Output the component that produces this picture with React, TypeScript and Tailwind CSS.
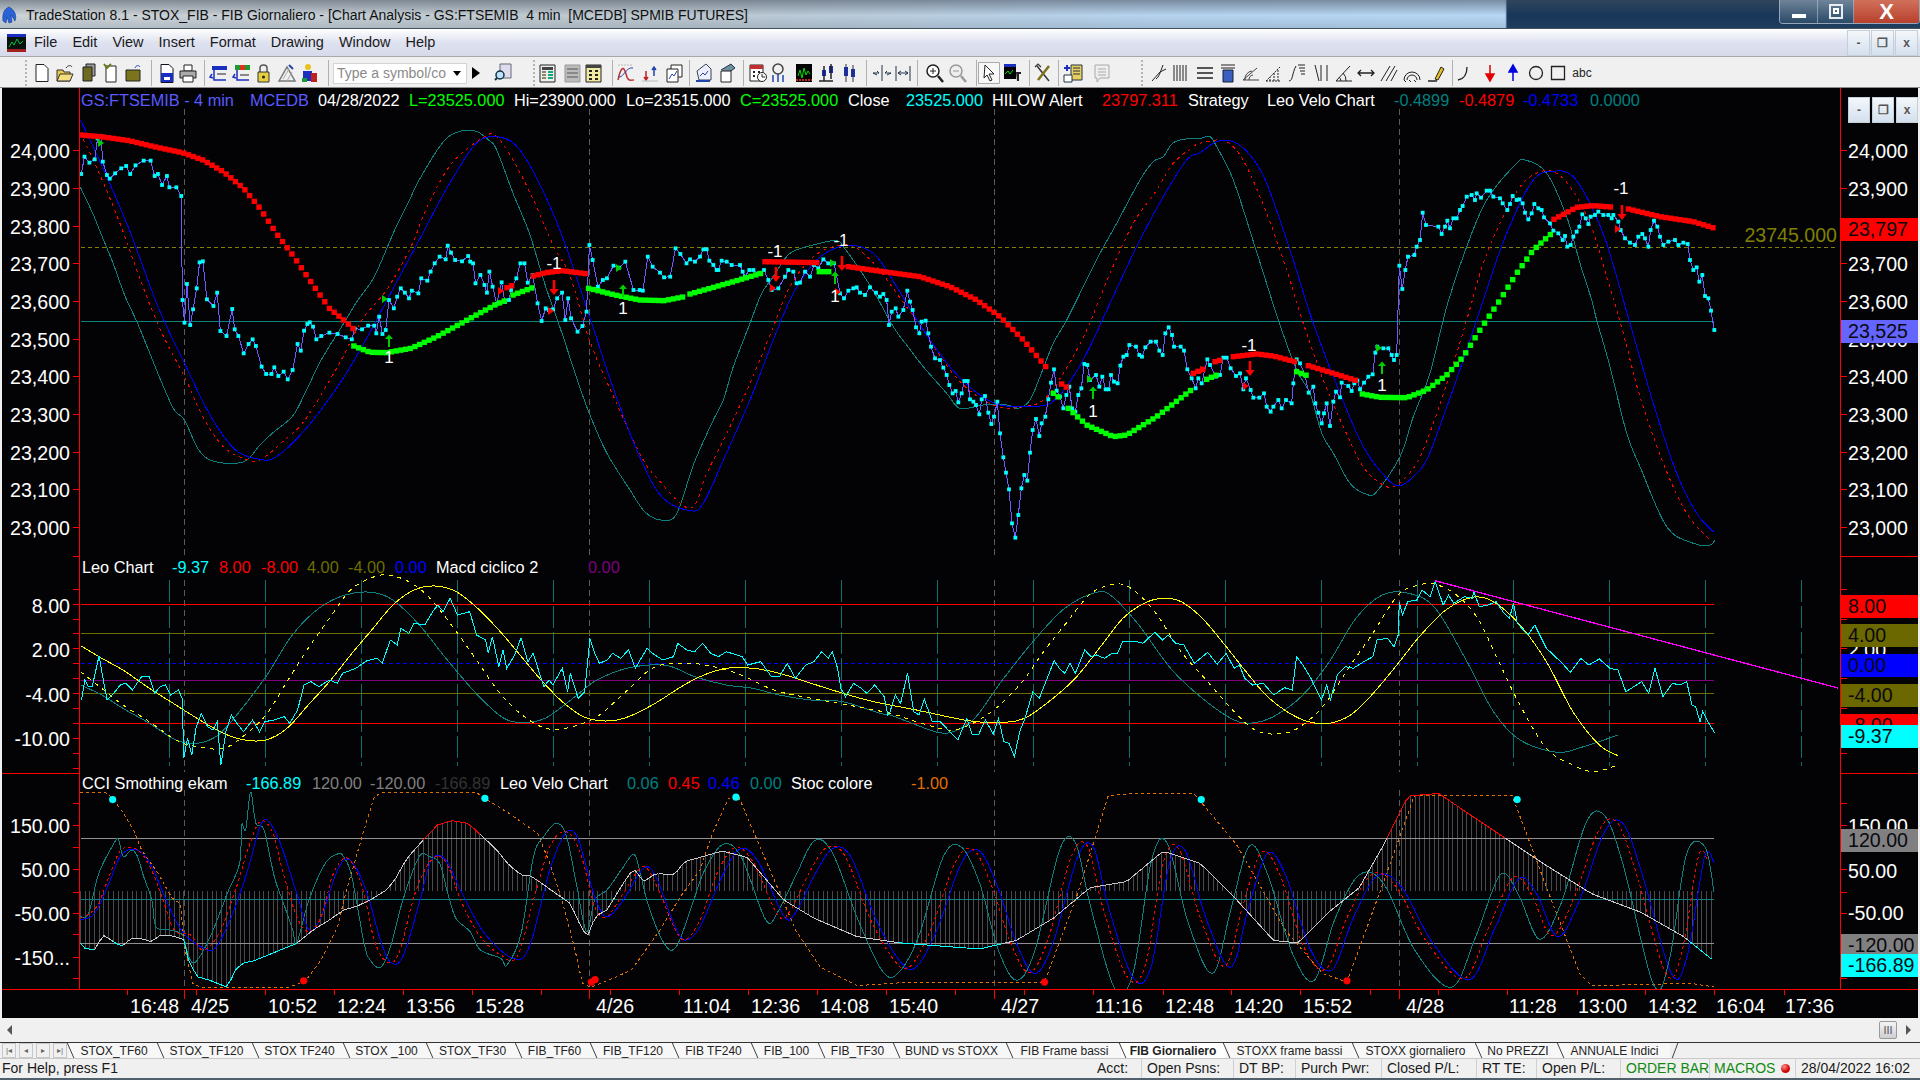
import type { ReactNode } from "react";

type Pt = [number, number];

const parse = (s: string, fn: (x: number, y: number) => Pt): Pt[] =>
  s.trim().split(/\s+/).map((p) => {
    const [x, y] = p.split(",").map(Number);
    return fn(x, y);
  });

// traced from crops of the chart, each with its own origin
const z7 = (s: string) => parse(s, (x, y) => [60 + x / 2.45, 100 + y / 3]);
const z8 = (s: string) => parse(s, (x, y) => [60 + x / 2.45, 760 + y / 3]);
const z9 = (s: string) => parse(s, (x, y) => [690 + x / 3, 100 + y / 3]);
const z10 = (s: string) => parse(s, (x, y) => [1200 + x / 3, 100 + y / 3]);
const z11 = (s: string) => parse(s, (x, y) => [70 + x / 1.889, 555 + y / 3]);
const z12 = (s: string) => parse(s, (x, y) => [890 + x / 1.889, 555 + y / 3]);
const rf = (s: string) => parse(s, (x, y) => [x * 1.2245, y * 1.2245]);

const line = (p: Pt[]) => "M" + p.map(([x, y]) => `${x.toFixed(1)} ${y.toFixed(1)}`).join("L");

function smooth(p: Pt[]) {
  let d = `M${p[0][0].toFixed(1)} ${p[0][1].toFixed(1)}`;
  for (let i = 0; i < p.length - 1; i++) {
    const a = p[Math.max(0, i - 1)];
    const b = p[i];
    const c = p[i + 1];
    const e = p[Math.min(p.length - 1, i + 2)];
    d += `C${(b[0] + (c[0] - a[0]) / 6).toFixed(1)} ${(b[1] + (c[1] - a[1]) / 6).toFixed(1)} ${(c[0] - (e[0] - b[0]) / 6).toFixed(1)} ${(c[1] - (e[1] - b[1]) / 6).toFixed(1)} ${c[0].toFixed(1)} ${c[1].toFixed(1)}`;
  }
  return d;
}

function sample(p: Pt[], step = 4.7): Pt[] {
  const out: Pt[] = [];
  let i = 0;
  for (let x = p[0][0]; x <= p[p.length - 1][0]; x += step) {
    while (i < p.length - 2 && p[i + 1][0] < x) i++;
    const t = (x - p[i][0]) / (p[i + 1][0] - p[i][0] || 1);
    out.push([x, p[i][1] + (p[i + 1][1] - p[i][1]) * t]);
  }
  return out;
}

const mainTeal = [
  ...z7("50,262 80,340 100,400 130,490 160,590 190,670 220,760 250,850 280,930 305,960 340,1050 380,1085 450,1085 490,1035 520,1000 570,948 600,880 640,780 690,680 730,600 770,530 820,390 860,290 880,240 930,140 965,100 1015,92 1050,120 1070,150 1110,280 1150,400 1190,560 1230,700 1270,850 1300,950 1340,1060"),
  [630, 490] as Pt, [645, 512] as Pt, [661, 520] as Pt, [676, 515] as Pt,
  ...z9("0,1125 20,1070 70,960 100,900 130,800 180,670 215,580 250,530 300,460 380,432 440,422 460,440 510,510 560,590 610,680 655,742 700,800 770,880 810,925 880,915 950,915 985,925 1020,900 1050,830 1090,730 1130,660 1180,560 1230,460 1280,370 1350,240 1390,185 1420,170 1450,128 1500,115"),
  ...z10("0,115 30,110 50,140 100,240 165,440 235,660 290,810 330,880 365,1000 400,1060 450,1150 500,1183 530,1175 600,1070 640,950 690,820 740,620 800,440 860,300 940,200 975,180 1040,220 1100,350 1140,490 1175,600 1190,660 1230,800 1280,1000 1320,1100 1400,1280 1480,1330 1530,1335 1545,1320"),
];
const mainRed = [
  ...z7("50,100 100,230 150,380 200,550 250,700 305,830 350,950 400,1040 450,1075 490,1080 550,1020 600,960 680,800 740,660 800,570 860,440 900,320 960,190 1040,110 1070,110 1110,180 1160,300 1210,440 1250,530 1300,730 1360,900 1420,1060 1460,1130"),
  ...z9("0,1225 50,1120 110,1000 180,850 250,680 300,560 370,470 450,435 500,445 560,500 620,580 700,690 780,810 850,880 930,922 1000,920 1060,900 1120,820 1190,690 1260,520 1330,370 1400,270 1450,190 1510,140"),
  ...z10("0,130 60,120 100,140 140,200 200,340 260,510 310,670 370,840 430,980 490,1100 550,1155 590,1155 650,1090 700,970 760,790 800,660 850,490 900,370 960,260 1010,220 1060,215 1110,260 1170,370 1220,530 1270,700 1320,890 1390,1090 1460,1240 1530,1320"),
];
const mainBlue = [
  ...z7("50,60 100,190 170,390 240,620 305,790 370,950 430,1050 490,1078 530,1070 600,990 680,860 740,740 810,580 880,420 950,260 1020,130 1080,112 1130,155 1190,290 1240,440 1300,660 1360,880 1420,1070"),
  [662, 497] as Pt,
  ...z9("0,1232 40,1210 100,1080 180,900 250,720 310,580 380,480 450,440 510,440 560,470 620,560 700,690 780,800 850,870 930,915 1050,918 1100,895 1150,830 1200,740 1260,610 1340,440 1420,290 1490,180"),
  ...z10("0,158 50,125 100,125 150,165 200,250 270,450 340,670 420,880 490,1040 560,1135 600,1157 640,1130 680,1080 730,950 790,780 850,600 920,400 1000,240 1070,213 1120,230 1170,310 1220,430 1290,670 1360,910 1430,1120 1490,1240 1540,1295"),
];
const price = [
  ...z7("52,222 60,170 72,188 85,178 92,115 100,108 105,185 115,225 122,236 135,220 150,205 162,198 172,222 185,196 205,182 222,182 232,228 240,222 250,255 262,228 268,262 285,262 297,288 300,600 305,668 311,552 319,675 326,628 335,565 342,487 350,484 360,598 376,618 385,578 393,693 408,708 422,627 428,688 437,708 450,760 462,732 472,718 480,738 494,800 505,822 518,822 525,802 535,828 548,815 558,838 570,810 582,732 590,752 598,692 606,672 612,667 620,680 628,718 640,708 660,698 680,702 700,712 715,718 722,686 740,688 755,677 770,677 775,700 782,650 790,702 798,690 806,600 818,625 826,590 835,565 845,578 855,595 862,572 878,580 885,535 900,542 908,515 918,490 930,470 945,478 950,437 958,458 968,480 985,484 1000,468 1005,485 1012,490 1018,550 1030,525 1040,555 1046,578 1052,515 1060,560 1070,612 1082,547 1090,606 1100,600 1105,570 1118,535 1128,490 1138,490 1146,548 1158,525 1170,610 1180,663 1190,625 1198,630 1208,628 1218,595 1230,578 1238,660 1245,595 1252,655 1268,695 1280,678 1290,635 1297,435 1305,480 1318,560 1330,540 1340,535 1356,497 1370,503 1385,485 1405,570 1420,570 1428,572 1440,470 1452,500 1470,518 1480,532 1495,530 1508,445 1520,462 1535,490"),
  ...z9("0,478 15,485 30,470 40,448 50,448 58,482 70,495 80,510 85,510 95,482 110,485 125,495 150,495 158,515 165,530 178,510 190,510 205,520 222,510 235,540 245,570 265,565 285,530 295,510 310,515 320,550 330,548 345,515 360,530 372,495 385,505 400,478 415,490 432,490 450,580 462,595 475,572 490,565 500,562 510,578 525,585 540,562 558,578 570,590 580,582 590,600 597,675 605,635 617,625 625,650 640,630 652,572 660,605 668,630 678,682 688,700 695,665 707,662 715,700 723,740 735,775 750,780 760,803 770,825 778,855 788,880 797,873 805,907 815,880 823,843 833,843 840,898 850,905 858,915 868,943 875,898 885,888 895,938 904,972 912,950 922,905 930,1000 940,1072 948,1118 957,1168 966,1270 976,1313 985,1245 994,1165 1003,1125 1012,1142 1020,1058 1028,990 1038,957 1048,1008 1055,970 1066,950 1075,898 1083,848 1092,808 1100,872 1110,890 1120,925 1129,885 1138,860 1146,925 1156,935 1165,885 1174,865 1183,792 1192,795 1200,840 1218,825 1228,860 1237,830 1247,868 1256,868 1263,825 1272,845 1283,850 1291,797 1300,770 1310,765 1318,735 1338,740 1348,765 1356,770 1366,742 1382,725 1398,725 1408,752 1418,765 1426,700 1436,682 1446,705 1452,740 1472,740 1482,752 1492,808 1505,835 1517,865 1525,835 1535,850"),
  ...z10("22,778 30,795 48,830 60,825 70,773 80,773 92,805 108,828 120,820 130,868 138,835 152,870 160,893 178,893 192,880 200,920 212,935 220,920 235,900 245,925 258,900 275,910 280,850 290,778 300,790 315,825 326,878 340,860 346,910 355,938 365,970 372,940 380,910 390,978 400,905 408,875 420,892 425,848 445,858 455,873 463,850 472,842 480,868 492,848 505,830 518,823 526,758 532,740 550,745 565,745 575,765 582,780 590,765 598,497 607,567 616,510 624,470 643,465 650,440 660,420 668,338 678,375 715,380 725,402 735,380 742,362 750,385 760,355 770,355 780,330 788,318 800,290 815,285 825,300 830,280 843,293 860,272 870,272 880,290 900,295 908,310 922,330 930,312 938,288 950,300 958,298 968,310 975,338 985,358 995,340 1003,312 1015,325 1025,330 1032,352 1050,370 1060,392 1075,400 1088,420 1095,408 1102,440 1112,435 1120,410 1130,395 1138,380 1147,343 1157,355 1165,372 1172,350 1185,345 1195,335 1210,345 1225,345 1235,355 1240,345 1255,365 1262,390 1275,415 1290,428 1305,435 1315,410 1327,402 1335,415 1345,440 1352,390 1362,362 1372,380 1380,410 1390,435 1405,425 1425,420 1435,435 1450,428 1463,432 1470,480 1480,510 1490,502 1498,545 1507,525 1515,588 1525,595 1533,632 1543,690"),
];

const redBands: Pt[][] = [
  z7("50,105 100,110 170,122 230,140 300,158 350,180 400,215 450,265 490,325 530,400 570,465 620,555 660,625 700,665 720,688"),
  z7("1095,563 1115,553"),
  z7("1160,528 1190,518 1230,512 1295,522"),
  z9("225,485 385,488"),
  z9("475,500 580,515 690,530 780,560 860,600 930,650 1000,720 1080,815"),
  z9("1115,852 1135,865"),
  z9("1510,820 1545,805"),
  z10("45,785 70,778"),
  z10("100,770 170,762 220,768 285,785"),
  z10("325,797 400,820 470,842 480,848"),
  z10("1062,358 1130,322 1180,317 1245,322"),
  z10("1285,327 1380,350 1480,365 1545,385"),
];
const greenBands: Pt[][] = [
  z7("720,738 760,757 800,758 860,745 920,712 980,672 1020,645 1070,612 1095,600"),
  z7("1110,585 1160,562"),
  z7("1295,565 1360,585 1420,600 1480,602 1530,590"),
  z9("0,582 60,565 130,545 220,518"),
  z9("388,515 422,515"),
  z9("1090,880 1110,895"),
  z9("1135,925 1190,975 1270,1010 1310,1005 1400,950 1510,865"),
  z10("20,838 50,825"),
  z10("290,815 322,827"),
  z10("487,882 540,892 620,893 680,870 740,825 790,770 840,690 900,600 950,520 1000,450 1055,400"),
];

const downArrows: Pt[] = [[554, 280], [776, 267], [842, 256], [1250, 361], [1622, 205]];
const upArrows: Pt[] = [[389, 335], [623, 285], [835, 272], [1093, 387], [1382, 362]];
const marks: { x: number; y: number; t: string }[] = [
  { x: 389, y: 357, t: "1" }, { x: 623, y: 308, t: "1" }, { x: 554, y: 263, t: "-1" },
  { x: 775, y: 251, t: "-1" }, { x: 835, y: 296, t: "1" }, { x: 841, y: 240, t: "-1" },
  { x: 1093, y: 411, t: "1" }, { x: 1249, y: 345, t: "-1" }, { x: 1382, y: 385, t: "1" },
  { x: 1621, y: 188, t: "-1" },
];
const tinyGreen: Pt[] = [[100, 143], [384, 299], [618, 268], [832, 263], [1089, 379], [1378, 348]];
const tinyRed: Pt[] = [[500, 291], [550, 311], [772, 288], [837, 292], [1245, 386], [1617, 229], [1202, 370]];

const leoYellow = [
  ...z11("20,272 60,310 100,345 150,400 200,450 240,490 290,535 330,555 370,555 410,520 450,450 490,380 530,300 570,225 610,150 650,105 690,93 730,110 770,160 810,225 850,300 890,375 930,440 970,485 1010,498 1050,488 1100,450 1150,400 1190,365 1240,340 1290,340 1340,355 1400,385 1460,415 1510,437"),
  ...z12("0,450 50,465 100,482 140,495 180,502 230,500 260,485 300,440 350,370 400,270 440,190 480,145 515,130 550,140 590,190 630,265 670,345 710,420 750,470 790,500 830,505 870,480 910,420 960,325 1000,245 1050,165 1100,127 1140,140 1190,210 1240,320 1290,470 1340,570 1375,602"),
];
const leoDash = [
  ...z11("20,350 60,400 100,450 150,500 200,555 240,575 290,580 330,540 370,480 410,380 450,280 490,190 530,105 570,68 600,60 640,80 680,130 730,230 770,320 810,410 850,475 890,515 920,523 960,510 1000,480 1050,410 1100,340 1150,325 1200,330 1260,355 1330,405 1400,430 1470,450"),
  ...z12("0,475 50,500 110,525 150,510 200,460 250,380 290,290 330,210 380,115 425,88 455,100 500,170 550,290 600,380 650,470 690,525 730,537 770,520 820,450 870,330 910,240 960,120 1000,90 1030,88 1070,120 1110,190 1150,320 1190,450 1240,580 1290,630 1330,650 1375,630"),
];
const leoTeal = [
  ...z11("20,390 60,420 100,460 150,505 200,555 240,565 280,540 320,470 370,365 420,240 470,160 520,120 570,112 610,135 660,210 710,310 770,420 820,490 860,502 900,488 950,430 990,380 1040,345 1080,332 1130,332 1180,365 1240,390 1290,400 1340,420 1400,435 1460,440 1530,475"),
  ...z12("0,480 50,510 90,532 120,530 160,490 210,380 270,260 330,160 390,112 420,125 470,210 530,340 590,430 650,495 690,503 730,480 780,420 830,320 880,190 930,120 980,115 1030,160 1090,320 1140,470 1190,555 1260,592 1310,575 1375,540"),
];
const leoCyan = [
  ...z11("22,435 28,375 35,395 42,395 55,302 60,350 70,435 85,410 95,390 105,385 118,405 135,365 150,365 160,415 170,395 180,390 190,420 205,405 212,430 215,610 222,550 230,600 238,520 248,475 260,515 270,525 278,500 285,630 295,525 305,480 315,505 328,530 345,495 358,530 368,500 385,495 405,485 415,505 430,465 442,390 455,380 470,395 490,375 505,385 515,355 540,340 560,318 580,310 590,325 605,255 618,270 625,220 640,235 650,205 670,210 685,170 695,150 705,170 718,130 732,180 755,170 768,240 785,255 790,295 798,245 810,335 818,285 825,340 840,300 852,248 865,320 875,295 895,395 905,375 912,390 930,340 940,410 945,355 960,430 972,410 978,320 982,250 990,290 1000,325 1015,315 1025,295 1040,310 1055,285 1068,340 1090,280 1100,295 1120,315 1140,305 1148,265 1165,285 1180,290 1195,265 1210,295 1225,305 1240,290 1270,305 1280,330 1305,320 1325,365 1340,365 1355,325 1370,370 1390,330 1405,320 1420,290 1432,310 1440,290 1450,340 1456,400 1465,425 1480,385 1495,400 1505,415 1520,390 1538,425 1545,480"),
  ...z12("0,470 10,420 20,445 33,355 45,470 55,480 65,433 80,500 95,500 110,525 128,555 145,490 155,537 168,537 180,495 195,537 205,490 215,560 225,565 235,605 245,530 255,490 270,410 282,430 310,317 320,340 330,355 340,325 350,355 368,285 380,305 390,300 405,310 420,295 430,295 440,258 460,258 478,265 500,232 515,255 525,240 540,265 555,270 575,325 600,292 618,328 635,295 650,340 660,330 670,370 685,390 705,385 725,420 745,398 760,405 768,305 780,330 795,370 815,435 825,390 832,435 845,360 860,335 875,340 895,320 912,305 920,255 940,250 952,275 960,240 962,140 968,180 978,140 995,135 1005,105 1020,125 1030,80 1045,150 1055,120 1065,145 1085,125 1100,130 1103,110 1113,155 1130,150 1145,140 1158,170 1170,190 1178,145 1185,205 1205,240 1218,210 1240,280 1270,325 1285,352 1305,310 1320,330 1340,312 1360,340 1375,345 1390,410 1420,380 1433,415 1445,340 1460,425 1478,385 1492,390 1505,380 1515,450 1522,455 1530,500 1535,470 1545,500 1558,535"),
];

const blueRight = rf("590,715 605,693 620,705 640,748 650,745 665,715 680,693 695,700 715,750 735,785 748,790 765,760 785,705 800,695 815,725 830,770 845,795 860,770 880,700 893,692 905,740 925,798 940,790 955,705 968,695 985,750 1005,790 1020,740 1035,697 1050,715 1070,775 1088,792 1105,750 1125,715 1145,725 1170,770 1200,800 1220,760 1240,718 1255,730 1272,765 1290,735 1310,680 1325,672 1340,710 1365,795 1378,780 1392,700 1400,705");
const cciBlue = [
  ...z8("50,480 85,460 120,370 150,285 190,270 225,320 260,420 300,515 345,560 380,565 420,470 460,330 490,200 510,183 540,250 580,400 610,510 640,470 680,330 710,300 750,390 785,540 810,607 840,590 880,430 910,300 945,300 985,400 1040,520 1110,595 1150,560 1200,330 1240,218 1270,240 1310,410 1340,470 1380,420 1430,325 1460,350 1500,480 1530,540 1568,500"),
  ...blueRight,
];
const cciRed = [
  ...z8("50,475 90,440 120,350 150,270 190,270 220,320 250,410 280,510 320,525 350,570 390,520 430,390 460,270 490,185 520,215 545,330 580,470 610,515 640,470 670,340 705,295 740,380 770,540 800,605 830,580 870,400 910,300 945,305 985,430 1030,530 1080,585 1120,590 1160,420 1200,260 1240,215 1275,280 1310,440 1340,470 1380,400 1430,320 1470,400 1500,490 1530,540 1568,480"),
  ...blueRight.map(([x, y]): Pt => [x - 6, y - 1]),
];
const cciTeal = [
  ...z8("50,470 70,460 95,340 130,255 143,238 155,290 175,270 190,290 205,350 225,420 235,500 270,510 300,525 315,590 333,605 370,525 410,400 440,310 445,195 455,210 467,97 480,190 500,210 525,350 545,420 570,510 580,550 610,420 650,310 680,282 695,290 715,350 745,550 760,600 785,622 810,560 840,420 880,290 905,290 930,310 950,400 970,475 1005,515 1030,570 1080,595 1095,615 1130,520 1160,290 1185,230 1215,190 1240,225 1265,370 1290,515 1310,420 1340,390 1375,330 1405,283 1420,330 1440,430 1480,550 1510,560 1550,430"),
  ...blueRight.slice(0, -1).map(([x, y], i): Pt => [x - 18, y + (y - 900) * 0.12 + (i % 2 ? 2 : -2)]),
  [1705, 847],
  [1714, 892],
];
const cciStoc = [
  ...z8("50,97 110,97 125,110 150,150 180,210 200,270 240,340 275,415 295,430 305,560 325,670 345,682 410,682 560,682 600,665 640,600 680,500 700,400 740,230 770,110 790,97 1020,97 1040,115 1100,160 1170,220 1200,310 1230,420 1260,560 1280,670 1300,682 1340,663 1400,630 1470,510 1520,410 1568,330"),
  ...rf("582,680 595,652 603,650 620,690 650,760 670,790 700,805 745,802 853,802 880,730 905,650 925,648 975,648 1010,690 1050,760 1080,795 1100,802 1130,720 1155,650 1235,650 1265,730 1290,795 1300,805 1380,803 1400,806"),
];
const cciEnv = sample([
  ...z8("50,550 60,565 85,570 105,525 125,540 150,560 175,535 195,535 225,545 245,525 275,527 305,540 315,600 335,650 365,660 410,682 430,630 450,607 470,605 520,580 580,550 620,510 660,480 695,450 725,440 760,420 800,390 820,360 850,295 890,240 925,195 960,182 1000,190 1040,235 1070,270 1100,315 1130,345 1150,345 1180,370 1220,405 1250,430 1280,510 1295,527 1310,470 1340,450 1380,370 1405,325 1430,365 1460,340 1505,345 1530,305 1568,292"),
  ...rf("590,695 610,700 640,735 665,750 700,765 735,770 760,772 800,775 830,768 860,750 890,725 920,720 950,695 980,705 1010,735 1040,768 1060,770 1085,745 1110,725 1130,690 1150,650 1175,648 1200,665 1230,685 1260,705 1300,730 1340,745 1375,765 1400,785"),
]);

const cyanDots: Pt[] = rf("92,653 396,652 601,651 981,653 1239,653");
const redDots: Pt[] = rf("248,801 483,802 486,800 853,802 1100,801");

const sessions = [184.5, 589.5, 994.5, 1399.5];
const leoGrid = [169.5, 265.5, 361.5, 457.5, 553.5, 649.5, 745.5, 841.5, 937.5, 1033.5, 1129.5, 1225.5, 1321.5, 1417.5, 1513.5, 1609.5, 1705.5, 1801.5];

const hLine = (y: number, color: string, x2 = 1714, dash?: string, w = 1) => (
  <line x1={81} x2={x2} y1={y} y2={y} stroke={color} strokeWidth={w} strokeDasharray={dash} shapeRendering="crispEdges" />
);

function Curve({ d, color, dash }: { d: string; color: string; dash?: string }) {
  return <path d={d} fill="none" stroke={color} strokeDasharray={dash} shapeRendering="crispEdges" />;
}

function MainPlot() {
  return (
    <svg viewBox="80 88 1760 468" className="block h-full w-full">
      {sessions.map((x) => (
        <line key={x} x1={x} x2={x} y1={109} y2={556} stroke="#5a5a5a" strokeDasharray="6 4" shapeRendering="crispEdges" />
      ))}
      {hLine(247.5, "#808000", 1837, "4 3")}
      {hLine(321.5, "#0e8080")}
      <Curve d={smooth(mainTeal)} color="#0e8080" />
      <Curve d={smooth(mainRed)} color="#ff0000" dash="3 4" />
      <Curve d={smooth(mainBlue)} color="#0000ff" />
      <Curve d={line(price)} color="#6a5cff" />
      {price.map(([x, y], i) => (
        <rect key={i} x={x - 1.9} y={y - 1.9} width={3.8} height={3.8} fill="#00ffff" />
      ))}
      {redBands.map((b, i) =>
        sample(b).map(([x, y], j) => <rect key={`r${i}-${j}`} x={x - 2.7} y={y - 2.7} width={5.4} height={5.4} fill="#ff0000" />)
      )}
      {greenBands.map((b, i) =>
        sample(b).map(([x, y], j) => <rect key={`g${i}-${j}`} x={x - 2.7} y={y - 2.7} width={5.4} height={5.4} fill="#00ff00" />)
      )}
      {downArrows.map(([x, y]) => (
        <path key={x} d={`M${x - 1.3} ${y}h2.6v9h3.4l-4.7 6l-4.7 -6h3.4z`} fill="#ff0000" />
      ))}
      {upArrows.map(([x, y]) => (
        <path key={x} d={`M${x - 1} ${y + 12}h2v-8h3l-4 -4.5l-4 4.5h3z`} fill="#00d000" />
      ))}
      {tinyGreen.map(([x, y]) => (
        <path key={x} d={`M${x - 2} ${y - 4}l6 4l-6 4z`} fill="#00d000" />
      ))}
      {tinyRed.map(([x, y]) => (
        <path key={x} d={`M${x - 2} ${y - 4}l6 4l-6 4z`} fill="#ff0000" />
      ))}
    </svg>
  );
}

function LeoPlot() {
  return (
    <svg viewBox="80 556 1760 217" className="block h-full w-full">
      {leoGrid.map((x) => (
        <line key={x} x1={x} x2={x} y1={580} y2={766} stroke="#0e7070" strokeDasharray="22 4" shapeRendering="crispEdges" />
      ))}
      {sessions.map((x) => (
        <line key={x} x1={x} x2={x} y1={580} y2={772} stroke="#5a5a5a" strokeDasharray="6 4" shapeRendering="crispEdges" />
      ))}
      {hLine(604.5, "#ff0000")}
      {hLine(633.5, "#6e6e00")}
      {hLine(663.5, "#0000ff", 1714, "4 3")}
      {hLine(680.5, "#800080")}
      {hLine(693.5, "#6e6e00")}
      {hLine(723.5, "#ff0000")}
      <Curve d={smooth(leoTeal)} color="#0e8080" />
      <Curve d={smooth(leoDash)} color="#ffff00" dash="4 5" />
      <Curve d={smooth(leoYellow)} color="#ffff00" />
      <Curve d={line(leoCyan)} color="#00ffff" />
      <line x1={1435} y1={580.7} x2={1838} y2={688} stroke="#ff00ff" strokeWidth={1.3} shapeRendering="crispEdges" />
    </svg>
  );
}

function CciPlot() {
  const envColor = (y: number) => (y < 838 ? "#ff0000" : y > 943 ? "#00ffff" : "#c8c8c8");
  return (
    <svg viewBox="80 773 1760 216" className="block h-full w-full">
      {cciEnv.map(([x, y], i) => (
        <line key={i} x1={x} x2={x} y1={891} y2={y} stroke="#4a4a4a" shapeRendering="crispEdges" />
      ))}
      {sessions.map((x) => (
        <line key={x} x1={x} x2={x} y1={790} y2={989} stroke="#5a5a5a" strokeDasharray="6 4" shapeRendering="crispEdges" />
      ))}
      {hLine(838.5, "#909090")}
      {hLine(899.5, "#0e8080")}
      {hLine(943.5, "#909090")}
      <Curve d={line(cciStoc)} color="#e07000" dash="3 3" />
      <Curve d={smooth(cciTeal)} color="#0e8080" />
      <Curve d={smooth(cciBlue)} color="#0000ff" />
      <Curve d={smooth(cciRed)} color="#ff0000" dash="3 3" />
      {cciEnv.slice(1).map(([x, y], i) => (
        <line key={i} x1={cciEnv[i][0]} y1={cciEnv[i][1]} x2={x} y2={y} stroke={envColor(y)} shapeRendering="crispEdges" />
      ))}
      {cyanDots.map(([x, y]) => (
        <circle key={x} cx={x} cy={y} r={3.6} fill="#00ffff" />
      ))}
      {redDots.map(([x, y]) => (
        <circle key={x} cx={x} cy={y} r={3.6} fill="#ff0000" />
      ))}
    </svg>
  );
}

type Box = { y: number; t: string; bg?: string };

function Axis({ top, ticks, labels, side }: { top: number; ticks: number[]; labels: Box[]; side: "l" | "r" }) {
  return (
    <div className="relative h-full">
      {side === "r" ? <div className="absolute inset-y-0 left-0 w-px bg-[#ff0000]" /> : <div className="absolute inset-y-0 right-0 w-px bg-[#ff0000]" />}
      {ticks.map((y) => (
        <div
          key={y}
          className={side === "r" ? "absolute left-0 h-px w-[7px] bg-[#ff0000]" : "absolute right-0 h-px w-[7px] bg-[#ff0000]"}
          style={{ top: y - top }}
        />
      ))}
      {labels.map((l) =>
        l.bg ? (
          <div
            key={l.t + l.y}
            className={`absolute left-px right-0 flex h-[23px] items-center pl-[7px] text-[#0a0a10] ${l.bg}`}
            style={{ top: l.y - top }}
          >
            {l.t}
          </div>
        ) : (
          <div
            key={l.t + l.y}
            className={side === "r" ? "absolute left-[8px] flex h-[23px] items-center text-white" : "absolute right-[10px] flex h-[23px] items-center text-white"}
            style={{ top: l.y - top - 10 }}
          >
            {l.t}
          </div>
        )
      )}
    </div>
  );
}

type Leg = [string, number, string];

function Legend({ items, y }: { items: Leg[]; y: number }) {
  return (
    <>
      {items.map(([t, x, c]) => (
        <span key={t + x} className="absolute whitespace-pre text-[16.3px] leading-[20px]" style={{ left: x - 2, top: y - 98, color: c }}>
          {t}
        </span>
      ))}
    </>
  );
}

const legendMain: Leg[] = [
  ["GS:FTSEMIB - 4 min", 81, "#5a5aff"], ["MCEDB", 250, "#5a5aff"], ["04/28/2022", 318, "#ffffff"],
  ["L=23525.000", 409, "#00ff00"], ["Hi=23900.000", 514, "#ffffff"], ["Lo=23515.000", 626, "#ffffff"],
  ["C=23525.000", 740, "#00ff00"], ["Close", 848, "#ffffff"], ["23525.000", 906, "#00ffff"],
  ["HILOW Alert", 992, "#ffffff"], ["23797.311", 1102, "#ff0000"], ["Strategy", 1188, "#ffffff"],
  ["Leo Velo Chart", 1267, "#ffffff"], ["-0.4899", 1394, "#008080"], ["-0.4879", 1459, "#ff0000"],
  ["-0.4733", 1523, "#0000ff"], ["0.0000", 1590, "#008080"],
];
const legendLeo: Leg[] = [
  ["Leo Chart", 82, "#ffffff"], ["-9.37", 172, "#00ffff"], ["8.00", 219, "#ff0000"], ["-8.00", 261, "#ff0000"],
  ["4.00", 307, "#6e6e00"], ["-4.00", 348, "#6e6e00"], ["0.00", 395, "#0000ff"], ["Macd ciclico 2", 436, "#ffffff"],
  ["0.00", 588, "#800080"],
];
const legendCci: Leg[] = [
  ["CCI Smothing ekam", 82, "#ffffff"], ["-166.89", 246, "#00ffff"], ["120.00", 312, "#808080"], ["-120.00", 370, "#808080"],
  ["-166.89", 435, "#333333"], ["Leo Velo Chart", 500, "#ffffff"], ["0.06", 627, "#008080"], ["0.45", 668, "#ff0000"],
  ["0.46", 708, "#0000ff"], ["0.00", 750, "#008080"], ["Stoc colore", 791, "#ffffff"], ["-1.00", 911, "#e07000"],
];

const timeLabels: [string, number][] = [
  ["16:48", 130], ["4/25", 191], ["10:52", 268], ["12:24", 337], ["13:56", 406], ["15:28", 475], ["4/26", 596],
  ["11:04", 683], ["12:36", 751], ["14:08", 820], ["15:40", 889], ["4/27", 1001], ["11:16", 1095], ["12:48", 1165],
  ["14:20", 1234], ["15:52", 1303], ["4/28", 1406], ["11:28", 1509], ["13:00", 1578], ["14:32", 1648], ["16:04", 1716],
  ["17:36", 1785],
];
const timeTicks = [127, 196, 265, 334, 403, 472, 541, 610, 679, 748, 817, 886, 955, 1024, 1093, 1163, 1231, 1300, 1370, 1438, 1507, 1577, 1645, 1714, 1784];

const S = (p: ReactNode) => (
  <svg viewBox="0 0 22 22" className="block h-[22px] w-[22px]" fill="none">
    {p}
  </svg>
);

const icons: Record<string, ReactNode> = {
  doc: <path d="M5 2.5h8l4 4v13H5z" fill="#fff" stroke="#222" />,
  open: (
    <>
      <path d="M3 8h6l1 2h6v9H3z" fill="#e8c84a" stroke="#333" />
      <path d="M12 6c2-3 5-3 6-1" stroke="#333" />
      <path d="M3 19l3-7h13l-3 7z" fill="#f5de80" stroke="#333" />
    </>
  ),
  stack: (
    <>
      <path d="M8 2h9v12H8z" fill="#999" stroke="#222" />
      <path d="M5 5h9v14H5z" fill="#6f6a22" stroke="#222" />
    </>
  ),
  check: (
    <>
      <path d="M6 4h10v16H6z" fill="#fff" stroke="#222" />
      <path d="M4 2l3 4l4-4" stroke="#6b7a20" strokeWidth={2} />
    </>
  ),
  box: (
    <>
      <path d="M4 8h14v11H4z" fill="#7b741c" stroke="#222" />
      <path d="M13 6c1-3 4-3 5-1" stroke="#2244aa" />
    </>
  ),
  save: (
    <>
      <path d="M5 2.5h8l4 4v14H5z" fill="#fff" stroke="#112" />
      <path d="M5 11h12v9H5z" fill="#1a2fc0" />
      <path d="M8 15h6v3H8z" fill="#fff" />
    </>
  ),
  print: (
    <>
      <path d="M7 3h8v6H7z" fill="#fff" stroke="#222" />
      <path d="M3 9h16v7H3z" fill="#aaa" stroke="#222" />
      <path d="M6 14h10v6H6z" fill="#fff" stroke="#222" />
    </>
  ),
  win: (
    <>
      <path d="M4 4h15v4H4z" fill="#1a2fc0" />
      <path d="M6 8v10h12M4 12l-2 3l3 1" stroke="#1a2fc0" strokeWidth={1.5} />
      <path d="M9 12h9" stroke="#222" />
    </>
  ),
  win2: (
    <>
      <path d="M4 3h15v5H4z" fill="#1a9a30" />
      <path d="M9 3h5v5H9z" fill="#e03020" />
      <path d="M6 8v10h12M4 12l-2 3l3 1" stroke="#1a2fc0" strokeWidth={1.5} />
      <path d="M9 13h9" stroke="#222" />
    </>
  ),
  lock: (
    <>
      <path d="M7 10V6c0-4 7-4 7 0v4" stroke="#555" strokeWidth={1.5} />
      <path d="M5 10h11v10H5z" fill="#e6d040" stroke="#333" />
      <circle cx={10.5} cy={15} r={1.5} fill="#222" />
    </>
  ),
  tool: (
    <>
      <path d="M3 19L11 5l8 14z" stroke="#777" strokeWidth={1.5} />
      <path d="M7 17l6-10M11 19l5-9" stroke="#aaa" />
      <path d="M13 3l4 4" stroke="#2244aa" strokeWidth={2} />
    </>
  ),
  fig: (
    <>
      <circle cx={10} cy={5} r={3} fill="#e8c020" />
      <path d="M5 9h9v10H5z" fill="#1a2fc0" />
      <path d="M13 11h6v9h-6z" fill="#c02020" />
      <path d="M4 16h5v4H4z" fill="#1a9a30" />
    </>
  ),
  find: (
    <>
      <path d="M8 2h11v14H8z" fill="#dde" stroke="#667" />
      <circle cx={8} cy={13} r={4} fill="#bfe0ff" stroke="#134" strokeWidth={1.5} />
      <path d="M3 18l2-2" stroke="#134" strokeWidth={2} />
    </>
  ),
  sheet: (
    <>
      <path d="M3 3h15v17H3z" fill="#eee" stroke="#222" />
      <path d="M5 5h11v3H5z" fill="#444" />
      <path d="M5 10h4M5 13h4M5 16h4" stroke="#886" strokeWidth={2} />
      <path d="M11 10h5M11 13h5M11 16h5" stroke="#1a7" strokeWidth={2} />
    </>
  ),
  sheetg: (
    <>
      <path d="M3 3h15v17H3z" fill="#bbb" stroke="#999" />
      <path d="M5 7h11M5 11h11M5 15h11" stroke="#888" strokeWidth={2} />
    </>
  ),
  calc: (
    <>
      <path d="M3 3h15v17H3z" fill="#f0e9a0" stroke="#222" />
      <path d="M3 3h15v3H3z" fill="#444" />
      <path d="M6 9h3M12 9h3M6 13h3M12 13h3M6 17h3M12 17h3" stroke="#222" strokeWidth={2} />
    </>
  ),
  wave: (
    <>
      <path d="M3 3h15" stroke="#bbb" strokeDasharray="2 1" />
      <path d="M3 18c3-14 6-14 8-6s4 6 8 6" stroke="#c03030" strokeWidth={1.5} />
      <path d="M3 14c4 5 8-10 15-8" stroke="#2244aa" />
    </>
  ),
  udn: (
    <>
      <path d="M7 17V9M5 15l2 3l2-3" stroke="#c02020" strokeWidth={1.5} />
      <path d="M15 5v9M13 8l2-3l2 3" stroke="#2244aa" strokeWidth={1.5} />
      <path d="M3 19h16" stroke="#bbb" />
    </>
  ),
  chartw: (
    <>
      <path d="M8 3h11v12H8z" fill="#fff" stroke="#222" />
      <path d="M4 7h11v13H4z" fill="#fff" stroke="#222" />
      <path d="M6 17l3-5l2 2l3-5" stroke="#2244aa" />
    </>
  ),
  wins: (
    <>
      <path d="M4 9l9-7l5 5v11H6z" fill="#eef" stroke="#345" />
      <path d="M7 14l3-3l2 2l3-4" stroke="#2244aa" />
      <path d="M3 19h14" stroke="#2244aa" strokeWidth={2} />
    </>
  ),
  winh: (
    <>
      <path d="M5 8l10-6l4 4l-7 5" fill="#6f8fa0" stroke="#234" />
      <path d="M5 9h10v11H5z" fill="#fff" stroke="#222" />
    </>
  ),
  cal: (
    <>
      <path d="M3 3h13v16H3z" fill="#fff" stroke="#222" />
      <path d="M3 3h13v4H3z" fill="#c03030" />
      <path d="M6 10h2M11 10h2M6 14h2" stroke="#222" strokeWidth={2} />
      <circle cx={15} cy={15} r={4.5} fill="#fff" stroke="#222" />
      <path d="M15 12v3h3" stroke="#222" />
    </>
  ),
  rsi: (
    <>
      <circle cx={10} cy={7} r={5} stroke="#444" strokeWidth={1.5} />
      <path d="M10 12v8M5 20V13M15 20v-7" stroke="#2244aa" strokeWidth={1.5} />
    </>
  ),
  blk: (
    <>
      <path d="M3 2h16v18H3z" fill="#000" />
      <path d="M5 14l2-6l2 8l2-10l2 7l2-4l2 3" stroke="#00e000" />
      <path d="M3 18h16" stroke="#c02020" strokeWidth={2} strokeDasharray="2 1" />
    </>
  ),
  cand: (
    <>
      <path d="M6 8h4v6H6zM13 4h4v7h-4z" fill="#1a2fc0" />
      <path d="M8 4v15M15 2v15M3 19h14" stroke="#222" strokeWidth={1.5} />
    </>
  ),
  cand2: (
    <>
      <path d="M6 5h4v9H6zM13 7h4v8h-4z" fill="#1a2fc0" />
      <path d="M8 2v18M15 3v17" stroke="#333" />
    </>
  ),
  pin: <path d="M11 3v16M2 11h6l-2-2M2 11l4 2M20 11h-6l2-2M20 11l-4 2" stroke="#234" />,
  pout: <path d="M4 4v15M18 4v15M6 11h10M6 11l3-2M6 11l3 2M16 11l-3-2M16 11l-3 2" stroke="#234" />,
  zin: (
    <>
      <circle cx={9} cy={9} r={6} fill="#fff" stroke="#222" strokeWidth={1.5} />
      <path d="M6 9h6M9 6v6" stroke="#222" />
      <path d="M14 14l5 6" stroke="#222" strokeWidth={2.5} />
    </>
  ),
  zout: (
    <>
      <circle cx={9} cy={9} r={6} fill="#eee" stroke="#999" strokeWidth={1.5} />
      <path d="M6 9h6" stroke="#999" />
      <path d="M14 14l5 6" stroke="#999" strokeWidth={2.5} />
    </>
  ),
  cursor: (
    <>
      <path d="M0.5 0.5h21v21h-21z" fill="#f8f8f8" stroke="#aaa" />
      <path d="M7 3l9 9h-5l3 6l-2 1l-3-6l-3 3z" fill="#fff" stroke="#222" />
    </>
  ),
  blk2: (
    <>
      <path d="M3 2h12v15H3z" fill="#000" />
      <path d="M3 2h12v3H3z" fill="#1a2fc0" />
      <path d="M4 12l3-3l2 3l3-4" stroke="#00e000" />
      <path d="M15 10h5v2h-2v7h-2z" fill="#222" />
    </>
  ),
  wrench: (
    <>
      <path d="M5 4l12 15" stroke="#333" strokeWidth={1.5} />
      <path d="M17 4L6 18" stroke="#7b741c" strokeWidth={2.5} />
      <path d="M3 5l3-3l3 3" stroke="#333" strokeWidth={1.2} />
    </>
  ),
  grid: (
    <>
      <path d="M9 3h11v15H9z" fill="#e8d060" stroke="#234" />
      <path d="M11 6h7M11 9h7M11 12h7" stroke="#234" />
      <path d="M2 20v-7h8v7z" fill="#fff" stroke="#234" />
      <path d="M5 3v6M2 6h6" stroke="#1a2fc0" strokeWidth={2} />
    </>
  ),
  note: (
    <>
      <path d="M4 3h14v13H9l-3 4v-4H4z" fill="#eee" stroke="#aaa" />
      <path d="M7 7h8M7 10h8M7 13h8" stroke="#aaa" />
    </>
  ),
  d1: <path d="M4 19l8-9M8 17c3-2 4-6 7-14M12 10l6-3" stroke="#222" />,
  d2: <path d="M5 3v16M8 3v16M11 3v16M14 3v16M17 3v16" stroke="#222" />,
  d3: <path d="M3 6h16M3 11h16M3 16h16" stroke="#222" strokeWidth={1.5} />,
  d4: (
    <>
      <path d="M4 3h14M4 6h14" stroke="#222" />
      <path d="M6 8h10v12H6z" fill="#3a5fc0" stroke="#123" />
    </>
  ),
  d5: <path d="M3 18l14-12M5 18a8 8 0 0 1 7-9M9 18a5 5 0 0 1 4-5M3 18h16" stroke="#444" />,
  d6: <path d="M3 19l14-14M3 19h15M7 19v-4M11 19v-8M15 19V7" stroke="#222" strokeDasharray="2 1" />,
  d7: <path d="M3 19c4 0 3-8 7-15M12 3h7M13 6h6M14 9h5M15 12h4" stroke="#222" />,
  d8: <path d="M5 3l4 16M11 3v16M17 3v16" stroke="#222" />,
  d9: <path d="M3 19L17 4M3 19h16M8 19a6 6 0 0 0-2-4M13 19a10 10 0 0 0-3-8" stroke="#222" />,
  d10: <path d="M3 11h16M6 8l-3 3l3 3M16 8l3 3l-3 3" stroke="#222" strokeWidth={1.3} />,
  d11: <path d="M3 19L12 4M8 19l9-15M13 19l6-11" stroke="#222" />,
  d12: <path d="M3 18a8 8 0 0 1 16 0M6 18a5 5 0 0 1 10 0M3 18l2 2M8 18l2 2M13 18l2 2" stroke="#222" />,
  d13: (
    <>
      <path d="M3 19h9" stroke="#222" strokeWidth={1.5} />
      <path d="M10 17l6-12l3 2l-6 11z" fill="#e6c020" stroke="#222" />
    </>
  ),
  arc: <path d="M4 18c6-1 9-6 9-13" stroke="#222" strokeWidth={1.3} />,
  adown: <path d="M11 3v10M7 12h8l-4 7z" stroke="#e00000" fill="#e00000" strokeWidth={1.5} />,
  aup: <path d="M11 19V9M7 10h8l-4-7z" stroke="#0000e0" fill="#0000e0" strokeWidth={1.5} />,
  circle: <circle cx={11} cy={11} r={6.5} stroke="#222" strokeWidth={1.3} />,
  square: <path d="M4.5 4.5h13v13h-13z" stroke="#222" strokeWidth={1.3} />,
};

// [icon, centre x] — sep and grip are the toolbar dividers
const toolbar: [string, number][] = [
  ["grip", 26], ["doc", 42], ["open", 65], ["stack", 89], ["check", 111], ["box", 133], ["sep", 151], ["save", 167], ["print", 188],
  ["sep", 204], ["win", 219], ["win2", 242], ["lock", 264], ["tool", 287], ["fig", 309], ["sep", 328], ["combo", 400], ["play", 476],
  ["find", 503], ["grip", 534], ["sheet", 548], ["sheetg", 573], ["calc", 594], ["sep", 612], ["wave", 626], ["udn", 650], ["chartw", 674],
  ["sep", 689], ["wins", 704], ["winh", 727], ["sep", 743], ["cal", 758], ["rsi", 779], ["blk", 804], ["cand", 827], ["cand2", 849],
  ["sep", 866], ["pin", 882], ["pout", 903], ["sep", 917], ["zin", 935], ["zout", 958], ["sep", 976], ["cursor", 989], ["blk2", 1012],
  ["sep", 1029], ["wrench", 1043], ["sep", 1058], ["grid", 1073], ["note", 1102], ["grip", 1142], ["d1", 1159], ["d2", 1180], ["d3", 1205],
  ["d4", 1228], ["d5", 1251], ["d6", 1274], ["d7", 1297], ["d8", 1321], ["d9", 1344], ["d10", 1366], ["d11", 1389], ["d12", 1412], ["d13", 1436],
  ["sep", 1452], ["arc", 1465], ["adown", 1490], ["aup", 1513], ["circle", 1536], ["square", 1558], ["abc", 1582],
];
const toolWidth = (k: string) => (k === "sep" ? 1 : k === "grip" ? 3 : k === "combo" ? 134 : k === "abc" ? 20 : k === "play" ? 8 : 22);

function Tool({ kind }: { kind: string }) {
  if (kind === "sep") return <div className="h-[26px] w-px bg-[#b0b0b0]" />;
  if (kind === "grip") return <div className="h-[26px] w-[3px] border-l-2 border-dotted border-[#b5b5b5]" />;
  if (kind === "play") return <div className="h-0 w-0 border-y-[6px] border-l-[8px] border-y-transparent border-l-black" />;
  if (kind === "abc") return <span className="text-[12px] leading-none text-[#222]">abc</span>;
  if (kind === "combo") {
    return (
      <div className="flex h-[21px] w-[134px] items-center justify-between border border-[#d4d4d4] bg-white pl-[3px] pr-[5px] text-[14px] text-[#8a8a8a]">
        <span>Type a symbol/co</span>
        <span className="h-0 w-0 border-x-[4px] border-t-[5px] border-x-transparent border-t-black" />
      </div>
    );
  }
  return S(icons[kind]);
}

function Toolbar() {
  let end = 0;
  return (
    <div className="flex h-[31px] shrink-0 items-center border-b border-[#8c8c8c] bg-[#f0f0f0] pt-[2px]">
      {toolbar.map(([k, cx], i) => {
        const w = toolWidth(k);
        const ml = cx - w / 2 - end;
        end = cx + w / 2;
        return (
          <div key={i} className="flex shrink-0 items-center justify-center" style={{ marginLeft: ml, width: w }}>
            <Tool kind={k} />
          </div>
        );
      })}
    </div>
  );
}

const tabs: { t: string; w: string; on?: boolean }[] = [
  { t: "STOX_TF60", w: "w-[90px]" }, { t: "STOX_TF120", w: "w-[95px]" }, { t: "STOX TF240", w: "w-[91px]" },
  { t: "STOX _100", w: "w-[83px]" }, { t: "STOX_TF30", w: "w-[89px]" }, { t: "FIB_TF60", w: "w-[75px]" },
  { t: "FIB_TF120", w: "w-[82px]" }, { t: "FIB TF240", w: "w-[79px]" }, { t: "FIB_100", w: "w-[67px]" },
  { t: "FIB_TF30", w: "w-[75px]" }, { t: "BUND vs STOXX", w: "w-[113px]" }, { t: "FIB Frame bassi", w: "w-[113px]" },
  { t: "FIB Giornaliero", w: "w-[104px]", on: true }, { t: "STOXX frame bassi", w: "w-[129px]" },
  { t: "STOXX giornaliero", w: "w-[123px]" }, { t: "No PREZZI", w: "w-[82px]" }, { t: "ANNUALE Indici", w: "w-[111px]" },
];

function Tab({ t, w, on }: { t: string; w: string; on?: boolean }) {
  return (
    <div className={`relative flex h-full shrink-0 items-center justify-center ${w} ${on ? "bg-white font-bold" : "bg-[#f7f7f7]"}`}>
      <svg viewBox="0 0 12 16" className="absolute left-[-3px] top-0 h-full w-[12px]">
        <path d="M1 0l7 16" stroke="#333" fill="none" />
      </svg>
      <span className="whitespace-pre text-[12px] text-[#222]">{t}</span>
    </div>
  );
}

const statusCells: { t: string; w: string; c?: string }[] = [
  { t: "Acct:", w: "w-[50px]" }, { t: "Open Psns:", w: "w-[92px]" }, { t: "DT BP:", w: "w-[62px]" }, { t: "Purch Pwr:", w: "w-[86px]" },
  { t: "Closed P/L:", w: "w-[95px]" }, { t: "RT TE:", w: "w-[60px]" }, { t: "Open P/L:", w: "w-[84px]" },
  { t: "ORDER BAR", w: "w-[89px]", c: "text-[#118a11]" },
];

export default function App() {
  const main = [150, 188, 226, 263, 301, 339, 376, 414, 452, 489, 527];
  const leoTicks = [589, 604, 619, 633, 648, 663, 678, 693, 708, 723, 738, 753, 768];
  const cciTicks = [803, 825, 847, 869, 892, 913, 934, 957, 978];
  return (
    <div className="flex h-[1080px] w-[1920px] flex-col overflow-hidden bg-[#f0f0f0] font-['Liberation_Sans',Arial,sans-serif]">
      {/* glass title bar */}
      <div className="relative flex h-[28px] shrink-0 items-center bg-[linear-gradient(180deg,rgba(70,80,95,0.55)_0%,rgba(190,205,215,0)_55%,rgba(70,90,110,0.18)_100%),linear-gradient(90deg,#cdd4d8_0%,#bcc7cf_35%,#b6d3ee_60%,#b6d7f4_78.4%,#17375a_78.5%,#17375a_100%)]">
        <svg viewBox="0 0 16 18" className="ml-px mt-[2px] h-[18px] w-[16px]">
          <path d="M8 1C3 3 1 8 2 15l3 2l1-6l2 6l3-1l-1-7l4 6c2-5 0-11-6-14z" fill="#2a62d8" stroke="#123a90" strokeWidth={0.6} />
        </svg>
        <span className="ml-[9px] mt-[2px] whitespace-pre text-[14px] text-[#101010]">TradeStation 8.1 - STOX_FIB - FIB Giornaliero - [Chart Analysis - GS:FTSEMIB  4 min  [MCEDB] SPMIB FUTURES]</span>
        <div className="absolute right-0 top-0 flex h-[24px] overflow-hidden rounded-b-[4px] border border-t-0 border-[#c8d4de]/70">
          <div className="flex w-[37px] items-end justify-center bg-gradient-to-b from-[#6f8499] to-[#2b4a68] pb-[5px]">
            <div className="h-[4px] w-[14px] bg-white" />
          </div>
          <div className="flex w-[37px] items-center justify-center border-x border-[#c8d4de]/50 bg-gradient-to-b from-[#6f8499] to-[#2b4a68]">
            <div className="relative h-[15px] w-[14px] border-2 border-[#e6edf2]">
              <div className="absolute left-[2px] top-[2px] h-[6px] w-[6px] border-2 border-white" />
            </div>
          </div>
          <div className="flex w-[65px] items-center justify-center bg-gradient-to-b from-[#d0705a] to-[#b8402c]">
            <span className="text-[22px] font-bold leading-none text-white">X</span>
          </div>
        </div>
      </div>

      {/* menu */}
      <div className="flex h-[29px] shrink-0 items-center border-y border-t-[#44525c] border-b-[#a8a8a8] bg-gradient-to-b from-white via-[#dfe2f0] to-[#d6daea]">
        <svg viewBox="0 0 19 18" className="ml-[7px] h-[18px] w-[19px]">
          <rect width="19" height="18" fill="#08120c" />
          <rect width="19" height="3" fill="#1a2fc0" />
          <path d="M2 13l3-5l2 3l3-6l3 5l3-3" stroke="#00c040" fill="none" />
          <rect y="15" width="19" height="3" fill="#a02020" />
        </svg>
        <div className="ml-[8px] mt-[1px] flex gap-[15px] text-[14.5px] text-[#1a1a1a]">
          {["File", "Edit", "View", "Insert", "Format", "Drawing", "Window", "Help"].map((m) => (
            <span key={m}>{m}</span>
          ))}
        </div>
        <div className="ml-auto mr-[2px] flex gap-[1px]">
          {["-", "\u2750", "x"].map((b) => (
            <div key={b} className="flex h-[26px] w-[23px] items-center justify-center border border-[#c3cfda] bg-gradient-to-b from-[#f4f7fb] to-[#d4e0ee] text-[12px] font-bold text-[#555]">
              {b}
            </div>
          ))}
        </div>
      </div>

      <Toolbar />

      {/* chart panes */}
      <div className="relative mx-[2px] flex h-[930px] shrink-0 flex-col overflow-hidden bg-[#030305] text-[19.6px] leading-none">
        <div className="grid h-[468px] grid-cols-[78px_1fr_78px]">
          <Axis top={88} side="l" ticks={main} labels={["24,000", "23,900", "23,800", "23,700", "23,600", "23,500", "23,400", "23,300", "23,200", "23,100", "23,000"].map((t, i) => ({ t, y: main[i] }))} />
          <MainPlot />
          <Axis
            top={88}
            side="r"
            ticks={main}
            labels={[
              ...["24,000", "23,900", "23,800", "23,700", "23,600", "23,500", "23,400", "23,300", "23,200", "23,100", "23,000"].map((t, i) => ({ t, y: main[i] })),
              { t: "23,797", y: 218, bg: "bg-[#ff0000]" },
              { t: "23,525", y: 320, bg: "bg-[#6464ff]" },
            ]}
          />
        </div>
        <div className="grid h-[217px] grid-cols-[78px_1fr_78px]">
          <Axis top={556} side="l" ticks={[556, ...leoTicks]} labels={[{ t: "8.00", y: 605 }, { t: "2.00", y: 649 }, { t: "-4.00", y: 694 }, { t: "-10.00", y: 738 }]} />
          <LeoPlot />
          <div className="border-t border-t-[#ff0000]">
            <Axis
              top={557}
              side="r"
              ticks={[589, 619, 648, 678, 708, 738, 753]}
              labels={[
                { t: "2.00", y: 649 },
                { t: "8.00", y: 595, bg: "bg-[#ff0000]" },
                { t: "4.00", y: 624, bg: "bg-[#6b6800]" },
                { t: "0.00", y: 654, bg: "bg-[#0000ff]" },
                { t: "-4.00", y: 684, bg: "bg-[#6b6800]" },
                { t: "-8.00", y: 714, bg: "bg-[#ff0000]" },
                { t: "-9.37", y: 725, bg: "bg-[#00ffff]" },
              ]}
            />
          </div>
        </div>
        <div className="grid h-[216px] grid-cols-[78px_1fr_78px]">
          <div className="border-t border-t-[#ff0000]">
            <Axis top={774} side="l" ticks={cciTicks} labels={[{ t: "150.00", y: 825 }, { t: "50.00", y: 869 }, { t: "-50.00", y: 913 }, { t: "-150...", y: 957 }]} />
          </div>
          <CciPlot />
          <div className="border-t border-t-[#ff0000]">
            <Axis
              top={774}
              side="r"
              ticks={cciTicks}
              labels={[
                { t: "150.00", y: 825 },
                { t: "50.00", y: 870 },
                { t: "-50.00", y: 912 },
                { t: "120.00", y: 829, bg: "bg-[#808080]" },
                { t: "-120.00", y: 934, bg: "bg-[#808080]" },
                { t: "-166.89", y: 954, bg: "bg-[#00ffff]" },
              ]}
            />
          </div>
        </div>
        <div className="relative h-[29px] border-t border-[#ff0000]">
          {timeTicks.map((x) => (
            <div key={x} className="absolute top-0 h-[5px] w-px bg-[#ff0000]" style={{ left: x - 2 }} />
          ))}
          {sessions.map((x) => (
            <div key={x} className="absolute top-0 h-[9px] w-px bg-[#ff0000]" style={{ left: x - 2.5 }} />
          ))}
          {timeLabels.map(([t, x]) => (
            <span key={t} className="absolute top-[7px] text-white" style={{ left: x - 2 }}>
              {t}
            </span>
          ))}
        </div>

        {/* legends and markers lie over the panes */}
        <Legend items={legendMain} y={100} />
        <Legend items={legendLeo} y={567} />
        <Legend items={legendCci} y={783} />
        {marks.map((m) => (
          <span key={m.x} className="absolute -translate-x-1/2 text-[17px] text-white" style={{ left: m.x - 2, top: m.y - 88 - 8 }}>
            {m.t}
          </span>
        ))}
        <span className="absolute right-[81px] top-[138px] text-[#808000]">23745.000</span>
        <div className="absolute right-0 top-[9px] flex gap-[2px]">
          {["-", "\u2750", "x"].map((b) => (
            <div key={b} className="flex h-[26px] w-[22px] items-center justify-center border border-[#c3cfda] bg-gradient-to-b from-[#f4f7fb] to-[#d4e0ee] text-[12px] font-bold text-[#555]">
              {b}
            </div>
          ))}
        </div>
      </div>

      {/* horizontal scroll */}
      <div className="flex h-[24px] shrink-0 items-center bg-[#f0f0f0]">
        <div className="ml-[7px] h-0 w-0 border-y-[5px] border-r-[5px] border-y-transparent border-r-[#555]" />
        <div className="ml-auto h-[18px] w-[18px] rounded-[2px] border border-[#9a9a9a] bg-gradient-to-b from-[#f4f4f4] to-[#cfcfcf] text-center text-[11px] leading-[16px] text-[#555]">III</div>
        <div className="ml-[9px] mr-[9px] h-0 w-0 border-y-[5px] border-l-[5px] border-y-transparent border-l-[#555]" />
      </div>

      {/* sheet tabs */}
      <div className="flex h-[16px] shrink-0 items-stretch border-t border-[#333] bg-[#f0f0f0]">
        <div className="flex w-[69px] shrink-0 items-center gap-[3px] pl-[2px]">
          {["|\u25C2", "\u25C2", "\u25B8", "\u25B8|"].map((a) => (
            <div key={a} className="flex h-[15px] w-[14px] items-center justify-center border border-[#c8c8c8] text-[8px] text-[#666]">
              {a}
            </div>
          ))}
        </div>
        {tabs.map((t) => (
          <Tab key={t.t} {...t} />
        ))}
        <svg viewBox="0 0 12 16" className="h-full w-[12px] shrink-0">
          <path d="M8 0L2 16" stroke="#333" fill="none" />
        </svg>
      </div>

      {/* status bar */}
      <div className="flex h-[20px] shrink-0 items-center border-t border-[#c8c8c8] bg-[#f0f0f0] text-[14px] text-[#1a1a1a]">
        <span className="flex-1 pl-[2px]">For Help, press F1</span>
        {statusCells.map((c) => (
          <span key={c.t} className={`whitespace-nowrap border-r border-[#d0d0d0] pl-[5px] ${c.w} ${c.c ?? ""}`}>
            {c.t}
          </span>
        ))}
        <span className="flex w-[86px] items-center border-r border-[#d0d0d0] pl-[4px] text-[#118a11]">
          MACROS
          <span className="ml-[6px] h-[9px] w-[9px] rounded-full bg-[radial-gradient(circle_at_35%_30%,#ff9090,#d00000_60%)]" />
        </span>
        <span className="w-[124px] pl-[5px]">28/04/2022 16:02</span>
      </div>
      <div className="h-[2px] shrink-0 bg-[#50606c]" />
    </div>
  );
}
